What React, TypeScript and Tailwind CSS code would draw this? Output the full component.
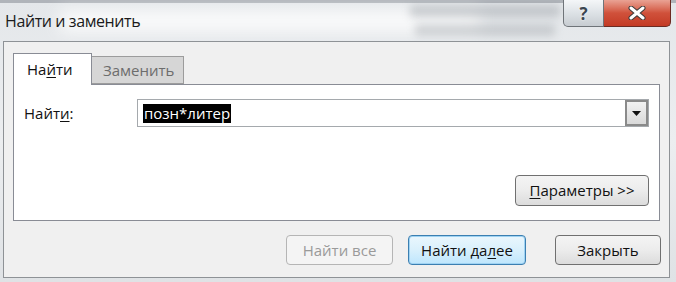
export default function App() {
  const font = { fontFamily: '"Open Sans", "Noto Sans", "DejaVu Sans", sans-serif' }

  return (
    <div
      className="w-[676px] h-[282px] relative overflow-hidden bg-gradient-to-b from-[#e4e7ea] via-[#eceef0] to-[#dfe2e5]"
      style={font}
    >
      {/* blurred background behind glass */}
      <div className="absolute left-0 top-0 w-[676px] h-[3px] bg-[#8d9399] opacity-60" />
      <div className="absolute left-[60px] top-[10px] w-[420px] h-[22px] bg-white opacity-80 blur-[8px]" />
      <div className="absolute left-[410px] top-[5px] w-[150px] h-[12px] bg-[#8f959b] opacity-40 blur-[4px]" />
      <div className="absolute left-[415px] top-[24px] w-[140px] h-[12px] bg-[#9ca1a6] opacity-40 blur-[4px]" />

      {/* Title bar */}
      <div className="relative h-[41px] flex items-start">
        <span className="pl-[5px] pt-[10px] text-[16px] tracking-[-0.4px] text-[#1b1b1b] leading-[22px]">Найти и заменить</span>
        <div className="absolute left-[563px] top-0 flex">
          <div className="w-[41px] h-[27px] rounded-bl-[5px] border border-t-0 border-[#6f7479] bg-gradient-to-b from-[#f4f6f8] via-[#dde2e6] to-[#c7ccd1] flex items-center justify-center">
            <span className="text-[17px] font-bold text-[#3a4550] leading-none" style={{ textShadow: '0 0 2px #fff' }}>?</span>
          </div>
          <div className="w-[67px] h-[27px] rounded-br-[5px] border border-l-0 border-t-0 border-[#6b2b22] bg-gradient-to-b from-[#e9a294] via-[#d0513b] to-[#c33a24] flex items-center justify-center">
            <svg width="20" height="14" viewBox="0 0 20 14">
              <path d="M4 2 L16 12 M16 2 L4 12" stroke="#3a3a3a" strokeWidth="5" strokeLinecap="round" />
              <path d="M4 2 L16 12 M16 2 L4 12" stroke="#ffffff" strokeWidth="3" strokeLinecap="round" />
            </svg>
          </div>
        </div>
      </div>

      {/* Window body */}
      <div className="relative ml-[3px] w-[667px] h-[237px] border border-[#8e9296] bg-[#f0f0f0] pl-[9px] pt-[11px]">
        {/* Tabs */}
        <div className="flex items-end h-[31px]">
          <div className="relative z-10 w-[79px] h-[32px] -mb-[1px] bg-white border border-b-0 border-[#898c95] flex items-center pl-[13px] text-[15px] text-[#111]">
            На<span className="underline underline-offset-2">й</span>ти
          </div>
          <div className="w-[92px] h-[28px] bg-[#d6d6d6] border border-l-0 border-[#9c9c9c] flex items-center pl-[11px] text-[15px] text-[#6d6d6d]">
            Заменить
          </div>
        </div>

        {/* Panel */}
        <div className="w-[647px] h-[137px] bg-white border border-[#898c95] relative">
          <div className="flex items-center mt-[14px]">
            <span className="w-[123px] pl-[10px] text-[15px] text-[#111]">
              Найт<span className="underline underline-offset-2">и</span>:
            </span>
            <div className="w-[512px] h-[28px] border border-[#a5a9ad] flex items-center">
              <div className="flex-1 pl-[5px] flex items-center">
                <span className="bg-black text-white text-[15px] leading-[19px] px-[1px]">позн*литер</span>
              </div>
              <div className="w-[23px] h-[26px] border-2 border-[#8a8a8a] bg-gradient-to-b from-[#f2f2f2] to-[#d9d9d9] flex items-center justify-center">
                <svg width="9" height="5" viewBox="0 0 9 5">
                  <path d="M0 0 H9 L4.5 5 Z" fill="#111" />
                </svg>
              </div>
            </div>
          </div>

          <div className="absolute right-[10px] top-[90px] w-[134px] h-[31px] rounded-[4px] border border-[#707070] bg-gradient-to-b from-[#f4f4f4] via-[#ececec] to-[#dcdcdc] flex items-center justify-center text-[15px] text-[#111]">
            <span><span className="underline underline-offset-2">П</span>араметры &gt;&gt;</span>
          </div>
        </div>

        {/* Bottom buttons */}
        <div className="flex mt-[14px] ml-[273px] gap-[15px]">
          <div className="w-[107px] h-[30px] rounded-[4px] border border-[#b5b5b5] bg-[#f4f4f4] flex items-center justify-center text-[15px] text-[#9a9a9a]">
            Найти все
          </div>
          <div className="w-[118px] h-[30px] rounded-[4px] border border-[#3c7fb1] bg-gradient-to-b from-[#eaf6fd] via-[#d9f0fc] to-[#bee6fd] flex items-center justify-center text-[15px] text-[#111]" style={{ boxShadow: 'inset 0 0 0 1px #9fd3f3' }}>
            <span>Найти да<span className="underline underline-offset-2">л</span>ее</span>
          </div>
          <div className="ml-[14px] w-[106px] h-[30px] rounded-[4px] border border-[#707070] bg-gradient-to-b from-[#f4f4f4] via-[#ececec] to-[#dcdcdc] flex items-center justify-center text-[15px] text-[#111]">
            Закрыть
          </div>
        </div>
      </div>
    </div>
  )
}
